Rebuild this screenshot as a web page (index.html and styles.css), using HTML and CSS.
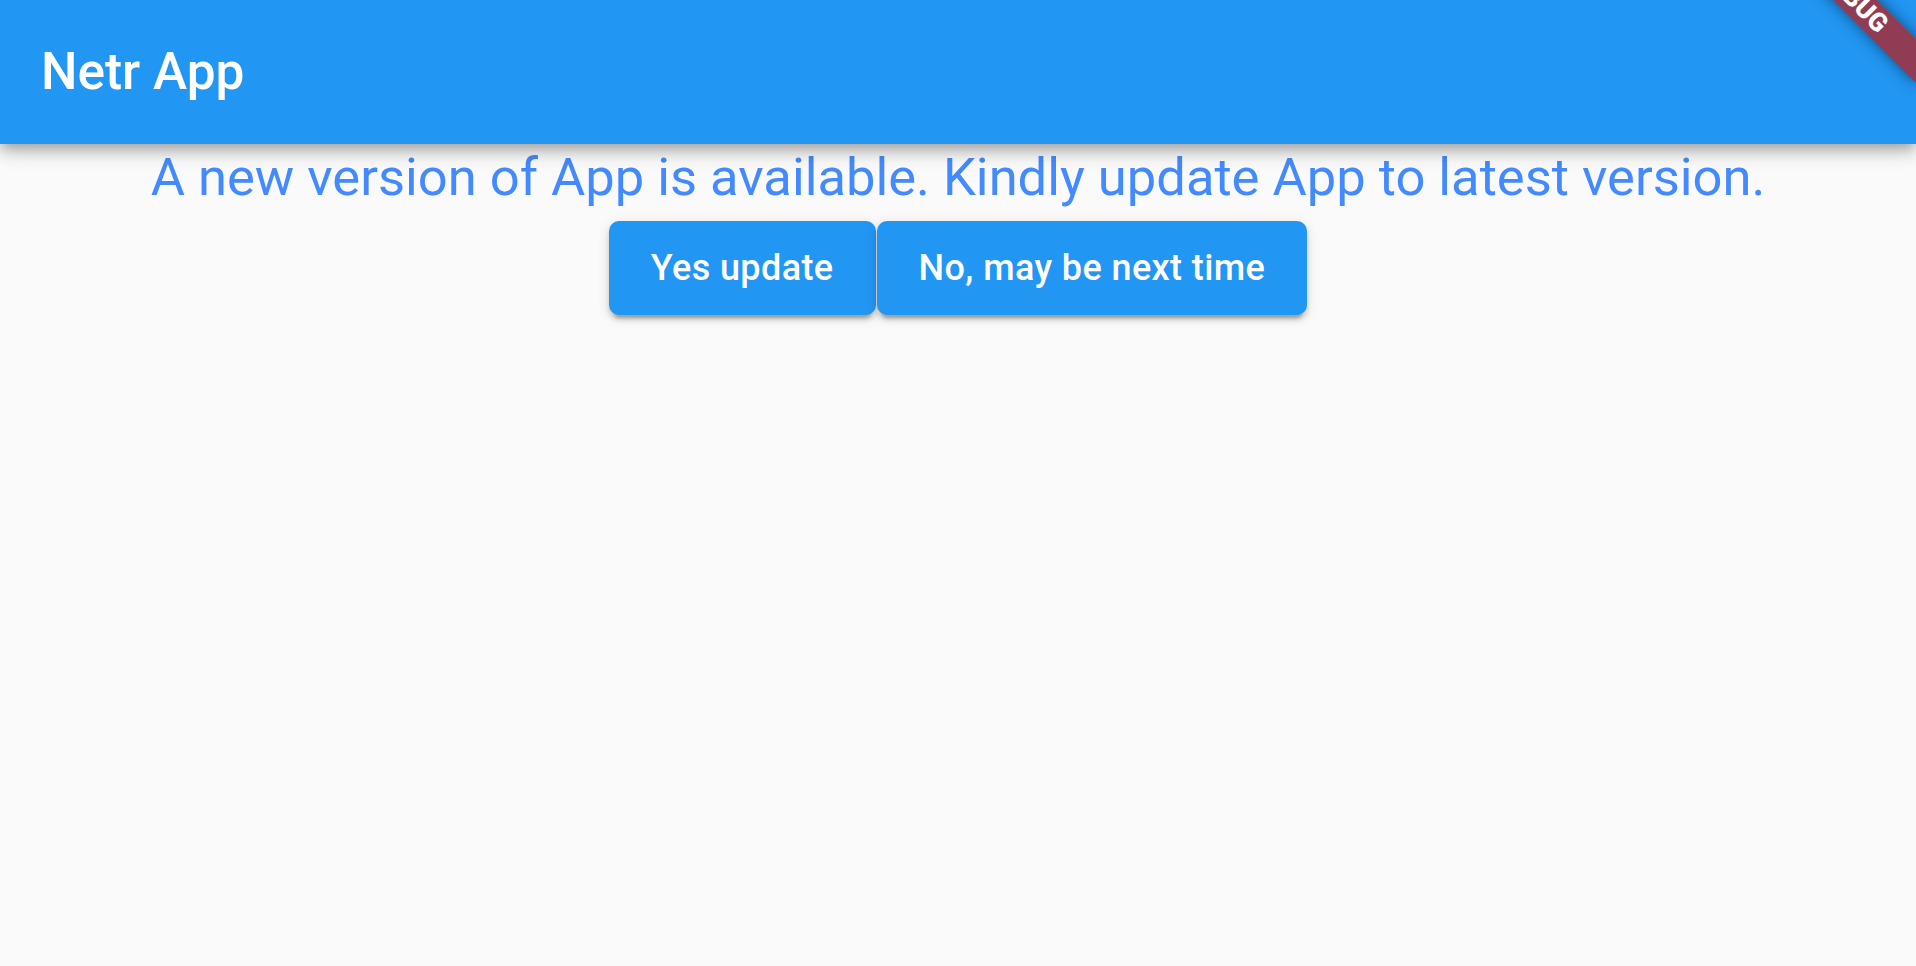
FILE: index.html
```
<!DOCTYPE html>
<html>
<head>
<meta charset="utf-8">
<link rel="stylesheet" href="styles.css">
</head>
<body>
<header class="appbar">
  <h1 class="title">Netr App</h1>
</header>
<main class="content">
  <p class="message">A new version of App is available. Kindly update App to latest version.</p>
  <div class="actions">
    <button class="btn">Yes update</button>
    <button class="btn">No, may be next time</button>
  </div>
</main>
<div class="banner-anchor"><div class="banner">DEBUG</div></div>
</body>
</html>
```
FILE: styles.css
```
html, body {
  margin: 0;
  padding: 0;
  width: 1916px;
  height: 966px;
  overflow: hidden;
  background: #fafafa;
  font-family: Roboto, "Liberation Sans", sans-serif;
}
body {
  position: relative;
}
.appbar {
  position: relative;
  z-index: 2;
  height: 144px;
  background: #2196f3;
  display: flex;
  align-items: center;
  padding: 0 41px;
  box-shadow: 0 5px 10px -3px rgba(0,0,0,0.2), 0 10px 13px 0 rgba(0,0,0,0.14), 0 3px 26px 0 rgba(0,0,0,0.12);
}
.title {
  margin: 0;
  color: #fff;
  font-size: 51.4px;
  font-weight: 500;
  line-height: 1.17;
}
.content {
  display: flex;
  flex-direction: column;
  align-items: center;
}
.message {
  margin: 0;
  color: #448aff;
  font-size: 52.5px;
  font-weight: 400;
  line-height: 66px;
  text-align: center;
}
.actions {
  display: flex;
  gap: 1px;
  margin-top: 11px;
}
.btn {
  border: none;
  margin: 0;
  height: 94px;
  padding: 0 42px;
  border-radius: 10px;
  background: #2196f3;
  color: #fff;
  font-family: Roboto, "Liberation Sans", sans-serif;
  font-size: 36px;
  font-weight: 500;
  letter-spacing: 0.4px;
  box-shadow: 0 8px 3px -5px rgba(0,0,0,0.2), 0 5px 5px 0 rgba(0,0,0,0.14), 0 3px 13px 0 rgba(0,0,0,0.12);
}
.banner-anchor {
  position: absolute;
  top: -63px;
  right: 0;
  width: 0;
  height: 0;
  z-index: 5;
  transform-origin: 0 0;
  transform: rotate(45deg);
}
.banner {
  position: absolute;
  left: -103px;
  top: 72px;
  width: 206px;
  height: 31px;
  background: rgba(183,28,28,0.74);
  box-shadow: 0 0 15px rgba(0,0,0,0.5);
  color: #fff;
  font-size: 26px;
  font-weight: 900;
  line-height: 31px;
  text-align: center;
}
```
